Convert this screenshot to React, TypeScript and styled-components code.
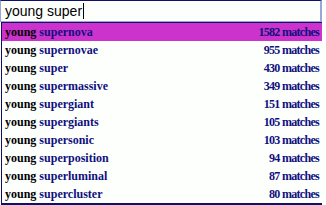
import React from 'react'
import styled, { createGlobalStyle } from 'styled-components'

const GlobalStyle = createGlobalStyle`
	html, body {
		margin: 0;
		padding: 0;
		background: #fdfffd;
	}
`

const Wrapper = styled.div`
	width: 326px;
	height: 205px;
	overflow: hidden;
	background: #fdfffd;
`

const SearchBox = styled.div`
	width: 322px;
	height: 22px;
	box-sizing: border-box;
	border-top: 1px solid #10106a;
	border-left: 1px solid #9aa6d8;
	border-right: 2px solid #9aa6d8;
	border-bottom: 1px solid #9aa6d8;
	display: flex;
	align-items: center;
	padding-left: 4px;
	font-family: 'Liberation Sans', Arial, sans-serif;
	font-size: 14px;
	color: #000;
	background: #fdfffd;
`

const Caret = styled.span`
	display: inline-block;
	width: 1px;
	height: 16px;
	background: #000;
	margin-left: 1px;
`

const Dropdown = styled.div`
	margin-left: 1px;
	width: 321px;
	box-sizing: border-box;
	border-top: 1px solid #10106a;
	border-left: 1px solid #10106a;
	border-bottom: 2px solid #10106a;
	background: #fdfffd;
`

const Row = styled.div<{ $active?: boolean }>`
	height: 18px;
	display: flex;
	align-items: center;
	justify-content: space-between;
	padding: 0 3px 0 3px;
	background: ${p => (p.$active ? '#cc33cc' : 'transparent')};
	font-family: 'Liberation Serif', serif;
	font-weight: bold;
	font-size: 12px;
`

const Prefix = styled.span`
	color: #000;
`

const Rest = styled.span`
	color: #10107e;
`

const Count = styled.span`
	color: #10107e;
	letter-spacing: -0.7px;
`

const items: [string, number][] = [
	['supernova', 1582],
	['supernovae', 955],
	['super', 430],
	['supermassive', 349],
	['supergiant', 151],
	['supergiants', 105],
	['supersonic', 103],
	['superposition', 94],
	['superluminal', 87],
	['supercluster', 80],
]

export default function App() {
	return (
		<Wrapper>
			<GlobalStyle />
			<SearchBox>
				young super
				<Caret />
			</SearchBox>
			<Dropdown>
				{items.map(([word, n], i) => (
					<Row key={word} $active={i === 0}>
						<span>
							<Prefix>young </Prefix>
							<Rest>{word}</Rest>
						</span>
						<Count>{n} matches</Count>
					</Row>
				))}
			</Dropdown>
		</Wrapper>
	)
}
